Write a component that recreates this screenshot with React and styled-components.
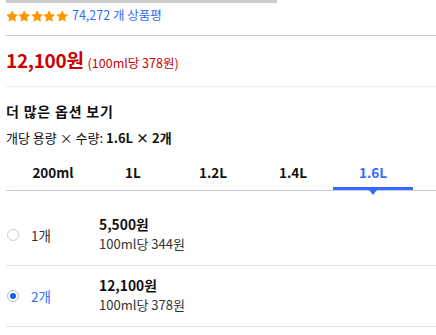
import React from 'react'
import { styled, createGlobalStyle } from 'styled-components'

const Global = createGlobalStyle`
  body {
    margin: 0;
    background: #fff;
    font-family: "Noto Sans CJK KR", "Noto Sans", sans-serif;
    color: #111;
  }
`;

const Page = styled.div`
  width: 436px;
  height: 335px;
  overflow: hidden;
  padding-left: 6px;
  box-sizing: border-box;
`;

const TopBar = styled.div`
  width: 271px;
  height: 3px;
  background: #ccc;
`;

const RatingRow = styled.div`
  display: flex;
  align-items: center;
  height: 33px;
  padding-top: 7px;
  padding-bottom: 14px;
  box-sizing: border-box;
  border-bottom: 1px solid #ccc;
`;

const Stars = styled.div`
  display: flex;
  margin-right: 4px;
`;

const ReviewCount = styled.span`
  font-size: 12.5px;
  color: #346aff;
  line-height: 1;
`;

const PriceRow = styled.div`
  display: flex;
  align-items: baseline;
  height: 51px;
  box-sizing: border-box;
  border-bottom: 1px solid #eee;
  padding-top: 12px;
`;

const BigPrice = styled.span`
  font-size: 19px;
  font-weight: 700;
  color: #cc0000;
  line-height: 24px;
  letter-spacing: -0.3px;
`;

const UnitPrice = styled.span`
  font-size: 12.5px;
  color: #cc0000;
  margin-left: 4px;
`;

const Section = styled.div`
  padding-top: 14px;
`;

const Title = styled.div`
  font-size: 14px;
  font-weight: 700;
  line-height: 20px;
  letter-spacing: 0.8px;
`;

const Selected = styled.div`
  font-size: 13px;
  line-height: 18px;
  margin-top: 8px;
  b { font-weight: 700; }
`;

const Tabs = styled.div`
  display: flex;
  margin-top: 13px;
  padding-left: 7px;
  border-bottom: 1px solid #ccd;
  height: 31px;
  box-sizing: border-box;
`;

const Tab = styled.div`
  position: relative;
  width: 80px;
  height: 30px;
  box-sizing: border-box;
  text-align: center;
  font-size: 13.5px;
  font-weight: 700;
  line-height: 24px;
  color: ${p => (p.$active ? '#346aff' : '#111')};
  border-bottom: 3px solid ${p => (p.$active ? '#346aff' : 'transparent')};
  &::after {
    content: '';
    display: ${p => (p.$active ? 'block' : 'none')};
    position: absolute;
    left: 50%;
    bottom: -8px;
    margin-left: -4px;
    border-left: 4px solid transparent;
    border-right: 4px solid transparent;
    border-top: 5px solid #346aff;
  }
`;

const Options = styled.div`
  margin-top: 14px;
`;

const Option = styled.div`
  display: flex;
  align-items: center;
  height: 61px;
  border-bottom: 1px solid #e4e4ea;
  box-sizing: border-box;
`;

const Radio = styled.span`
  width: 12px;
  height: 12px;
  border-radius: 50%;
  border: 1px solid ${p => (p.$checked ? '#bbb' : '#ccc')};
  box-sizing: border-box;
  margin-left: 1px;
  display: flex;
  align-items: center;
  justify-content: center;
  background: #fff;
  &::after {
    content: '';
    display: ${p => (p.$checked ? 'block' : 'none')};
    width: 6px;
    height: 6px;
    border-radius: 50%;
    background: #0a64ff;
  }
`;

const Qty = styled.span`
  width: 68px;
  margin-left: 12px;
  font-size: 13.5px;
  color: ${p => (p.$active ? '#346aff' : '#333')};
`;

const PriceBlock = styled.div`
  display: flex;
  flex-direction: column;
  margin-top: -3px;
`;

const OptPrice = styled.span`
  font-size: 13.8px;
  font-weight: 700;
  line-height: 19px;
`;

const OptUnit = styled.span`
  font-size: 13px;
  line-height: 19px;
  color: #333;
`;

function Star() {
  return (
    <svg width="12.4" height="12" viewBox="0 0 24 23">
      <path d="M12 0.5l3.5 7.3 8 1.1-5.8 5.6 1.4 7.9L12 18.6l-7.1 3.8 1.4-7.9L0.5 8.9l8-1.1z" fill="#ff9600" />
    </svg>
  );
}

const tabs = ['200ml', '1L', '1.2L', '1.4L', '1.6L'];
const options = [
  { qty: '1개', price: '5,500원', unit: '100ml당 344원', checked: false },
  { qty: '2개', price: '12,100원', unit: '100ml당 378원', checked: true },
];

export default function App() {
  return (
    <Page>
      <Global />
      <TopBar />
      <RatingRow>
        <Stars>
          {[0, 1, 2, 3, 4].map(i => <Star key={i} />)}
        </Stars>
        <ReviewCount>74,272 개 상품평</ReviewCount>
      </RatingRow>
      <PriceRow>
        <BigPrice>12,100원</BigPrice>
        <UnitPrice>(100ml당 378원)</UnitPrice>
      </PriceRow>
      <Section>
        <Title>더 많은 옵션 보기</Title>
        <Selected>개당 용량 × 수량: <b>1.6L × 2개</b></Selected>
        <Tabs>
          {tabs.map(t => <Tab key={t} $active={t === '1.6L'}>{t}</Tab>)}
        </Tabs>
        <Options>
          {options.map(o => (
            <Option key={o.qty}>
              <Radio $checked={o.checked} />
              <Qty $active={o.checked}>{o.qty}</Qty>
              <PriceBlock>
                <OptPrice>{o.price}</OptPrice>
                <OptUnit>{o.unit}</OptUnit>
              </PriceBlock>
            </Option>
          ))}
        </Options>
      </Section>
    </Page>
  );
}
